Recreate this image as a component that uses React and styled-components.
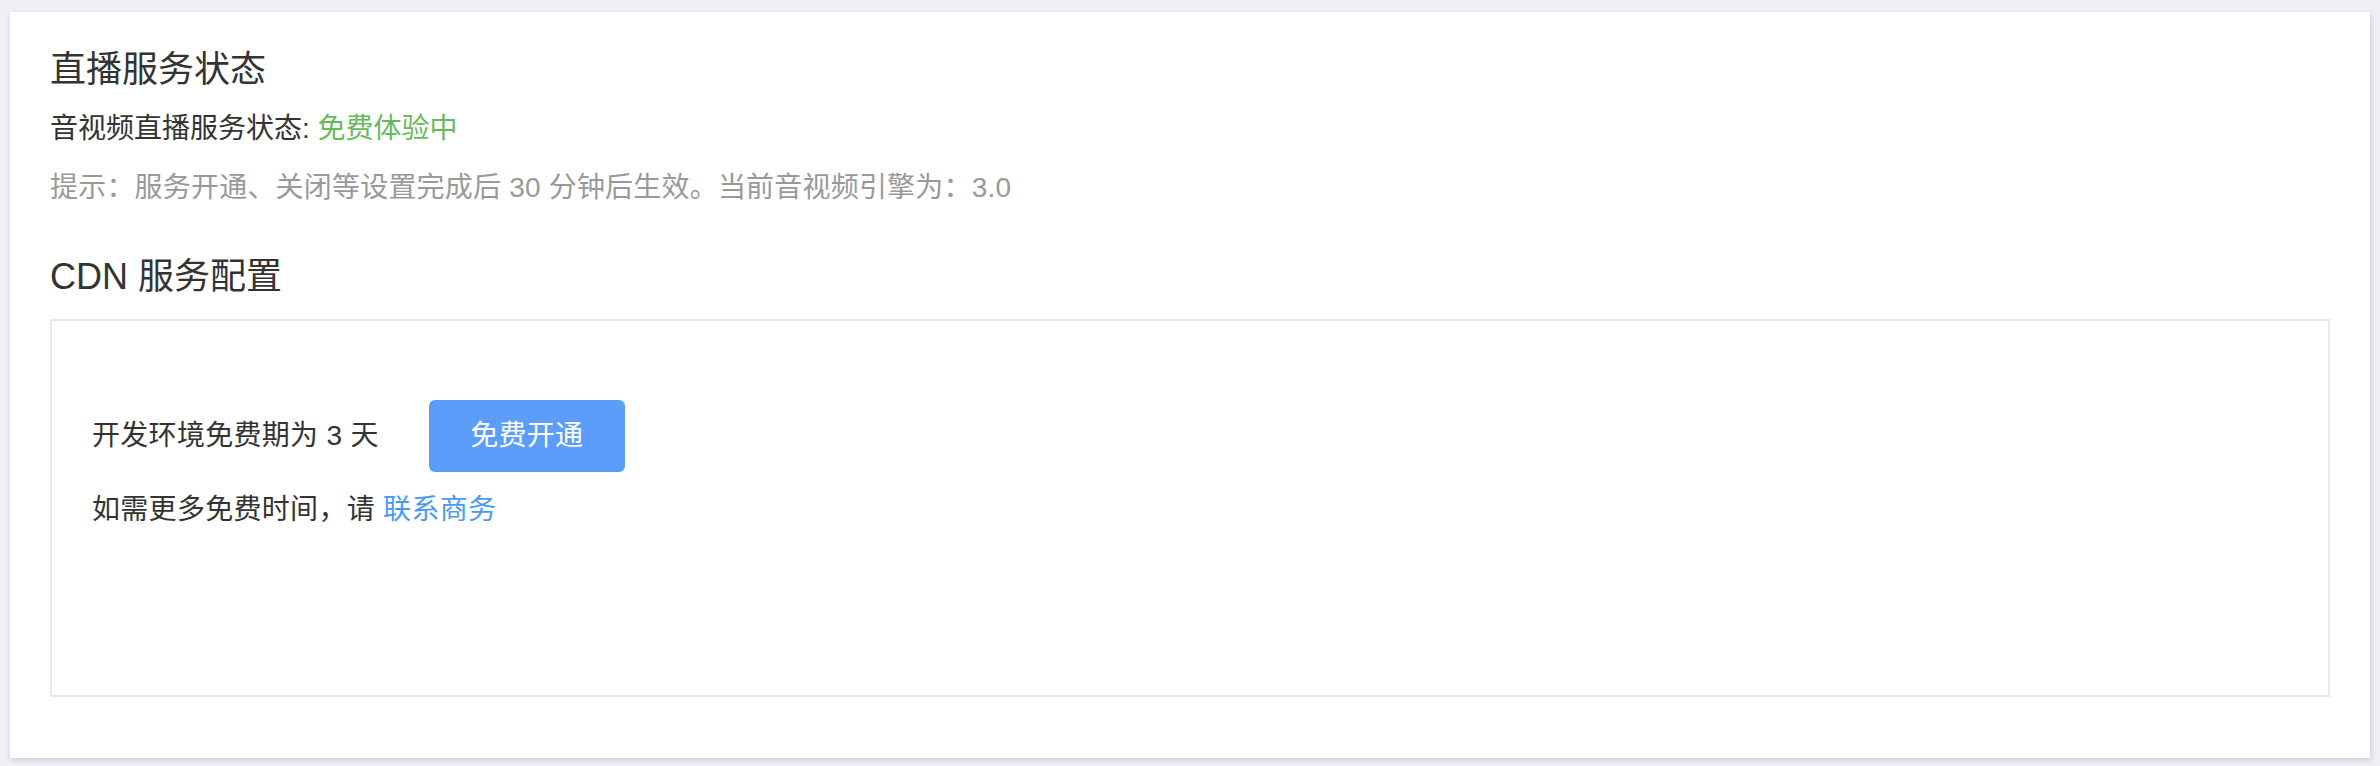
import React from 'react';
import styled, { createGlobalStyle } from 'styled-components';

const GlobalStyle = createGlobalStyle`
  html, body {
    margin: 0;
    padding: 0;
    background: #eef0f4;
  }

  body {
    font-family: "Liberation Sans", "Noto Sans CJK SC", sans-serif;
    color: #333;
  }

  #root {
    padding: 12px 10px 8px;
  }
`

const StyledPanel = styled.div`
  background: #fff;
  box-shadow: 1px 2px 6px rgba(40, 45, 80, 0.18);
  padding: 31px 40px 60px;
  box-sizing: border-box;
  height: 746px;

  .sectionTitle {
    margin: 0;
    font-size: 36px;
    line-height: 54px;
    font-weight: 400;
    color: #333;
  }

  .statusLine {
    margin: 11px 0 0;
    font-size: 28px;
    line-height: 42px;
  }

  .hint {
    margin: 17px 0 0;
    font-size: 28px;
    line-height: 42px;
    letter-spacing: 0.2px;
    color: #999;
  }

  .cdnTitle {
    margin-top: 41px;
  }
`

const StatusText = styled.span`
  color: ${props => props.color || '#333'};
`

const ConfigBox = styled.div`
  margin-top: 15px;
  border: 2px solid #e8e8e8;
  padding: 79px 40px 164px;
  font-size: 28px;
  line-height: 42px;
  letter-spacing: 0.3px;
`

const OpenRow = styled.div`
  display: flex;
  align-items: center;
  height: 72px;
`

const OpenButton = styled.button`
  margin-left: 50px;
  width: 196px;
  height: 72px;
  border: none;
  border-radius: 6px;
  background: #5c9dfa;
  color: #fff;
  font: inherit;
  font-size: 28px;
  letter-spacing: 0.3px;
  cursor: pointer;
`

const ContactRow = styled.div`
  margin-top: 17px;

  a {
    color: #4a9af5;
    text-decoration: none;
  }
`

const App = () => {
  return (
    <>
      <GlobalStyle />
      <StyledPanel>
        <h2 className='sectionTitle'>直播服务状态</h2>
        <p className='statusLine'>
          音视频直播服务状态: <StatusText color='#67ba5c'>免费体验中</StatusText>
        </p>
        <p className='hint'>提示：服务开通、关闭等设置完成后 30 分钟后生效。当前音视频引擎为：3.0</p>

        <h2 className='sectionTitle cdnTitle'>CDN 服务配置</h2>
        <ConfigBox>
          <OpenRow>
            <span>开发环境免费期为 3 天</span>
            <OpenButton>免费开通</OpenButton>
          </OpenRow>
          <ContactRow>
            如需更多免费时间，请 <a href='#'>联系商务</a>
          </ContactRow>
        </ConfigBox>
      </StyledPanel>
    </>
  );
}

export default App;
